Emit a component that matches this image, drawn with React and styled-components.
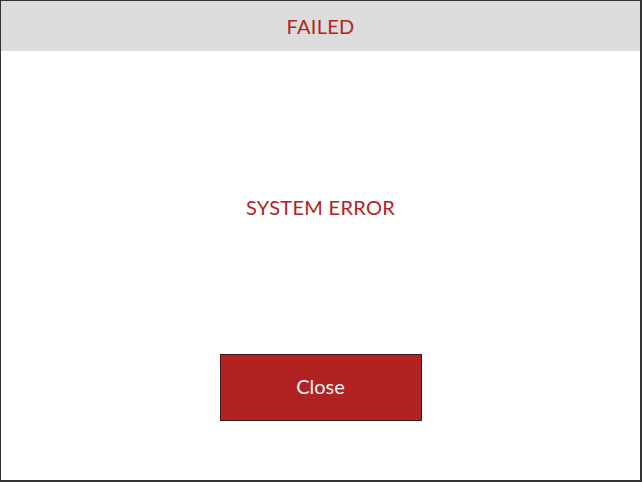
import React from "react";
import styled, { createGlobalStyle } from "styled-components";

const Global = createGlobalStyle`
  html, body {
    margin: 0;
    padding: 0;
    background: #ffffff;
  }
  body {
    font-family: "Lato", "Open Sans", sans-serif;
  }
`;

const Frame = styled.div`
  box-sizing: border-box;
  width: 642px;
  height: 482px;
  border-style: solid;
  border-color: #333333;
  border-width: 1px 2px 2px 1px;
  display: flex;
  flex-direction: column;
  background: #ffffff;
`;

const Header = styled.div`
  height: 50px;
  background: #dcdcdc;
  display: flex;
  align-items: center;
  justify-content: center;
  color: #b22222;
  font-size: 20px;
  letter-spacing: 0.3px;
`;

const Body = styled.div`
  flex: 1;
  display: flex;
  flex-direction: column;
  align-items: center;
  padding-top: 144px;
`;

const Message = styled.div`
  color: #b22222;
  font-size: 20px;
  line-height: 24px;
  letter-spacing: 0.3px;
`;

const CloseButton = styled.button`
  margin-top: 135px;
  width: 202px;
  height: 67px;
  box-sizing: border-box;
  padding: 0 0 3px;
  background: #b22222;
  border: 1px solid #3a1a1a;
  color: #f4f4f4;
  font-family: "Lato", "Open Sans", sans-serif;
  font-size: 20px;
  cursor: pointer;
`;

export default function App() {
  return (
    <>
      <Global />
      <Frame>
        <Header>FAILED</Header>
        <Body>
          <Message>SYSTEM ERROR</Message>
          <CloseButton>Close</CloseButton>
        </Body>
      </Frame>
    </>
  );
}
